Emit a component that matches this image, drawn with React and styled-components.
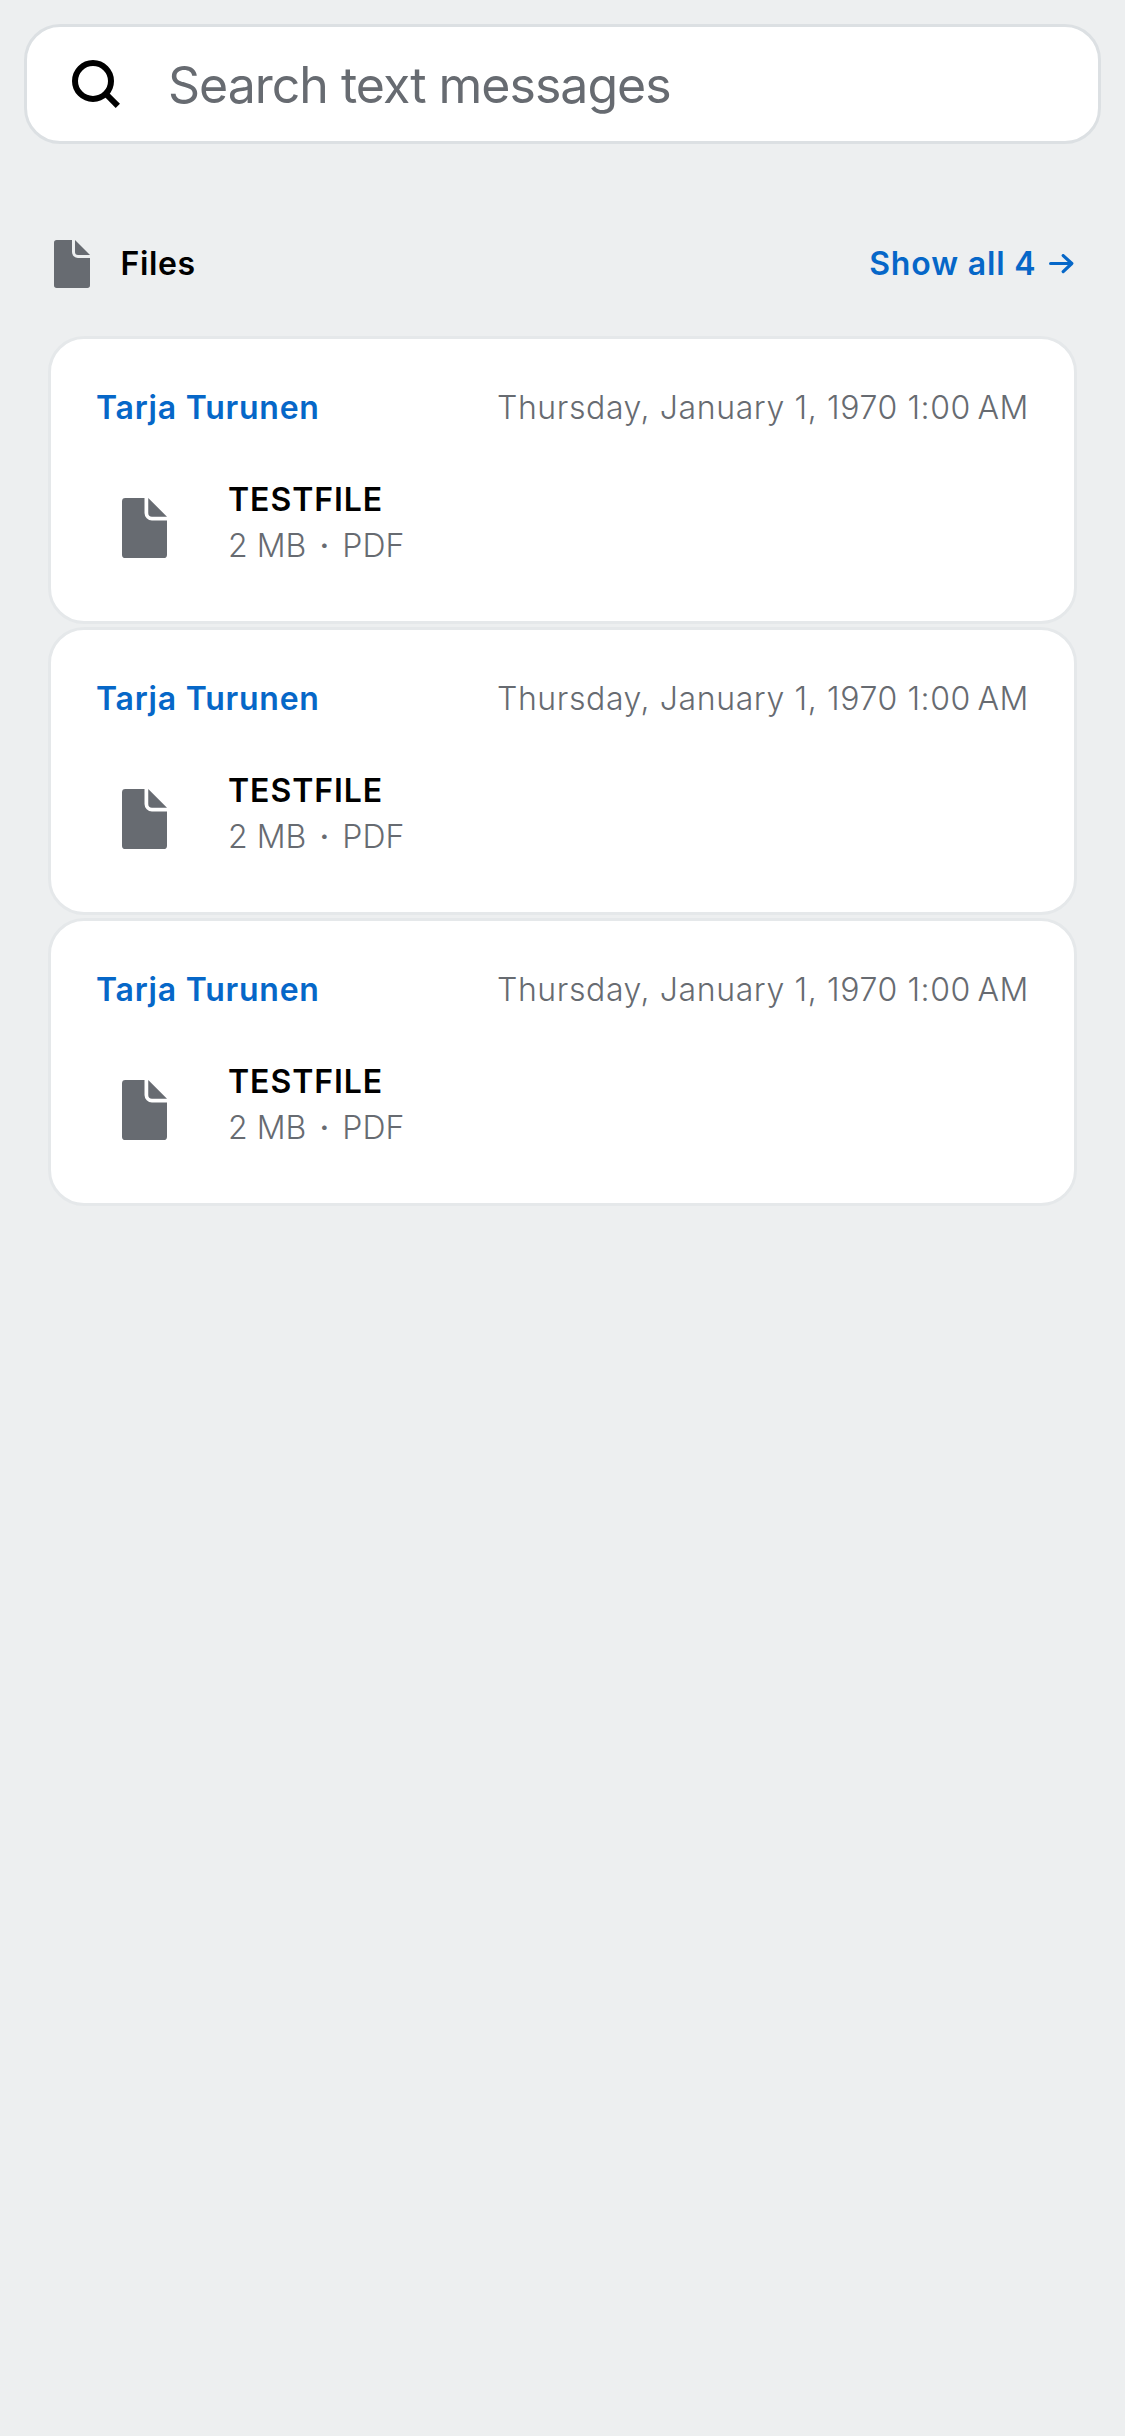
import React from "react";
import styled, { createGlobalStyle } from "styled-components";

const GlobalStyle = createGlobalStyle`
  *, *::before, *::after { box-sizing: border-box; }
  body {
    margin: 0;
    background: #edeff0;
    font-family: Inter, "Liberation Sans", sans-serif;
    font-size: 32px;
    color: #000;
  }
  h2 { margin: 0; }
`;

const Page = styled.main`
  display: flex;
  flex-direction: column;
  min-height: 100vh;
  padding: 24px;
`;

const SearchBar = styled.label`
  display: flex;
  align-items: center;
  gap: 48px;
  height: 120px;
  padding: 0 45px;
  background: #fff;
  border: 3px solid #dce0e3;
  border-radius: 36px;
`;

const SearchText = styled.span`
  font-size: 50px;
  line-height: 60px;
  letter-spacing: -1px;
  color: #676b71;
  padding-top: 1px;
  white-space: nowrap;
`;

const Section = styled.section`
  display: flex;
  flex-direction: column;
  padding: 96px 24px 0;
`;

const SectionHeader = styled.header`
  display: flex;
  align-items: center;
  height: 48px;
  margin-bottom: 48px;
  padding: 0 3px 0 6px;
`;

const SectionTitle = styled.h2`
  flex: 1;
  margin-left: 30.5px;
  font-size: 32px;
  font-weight: 600;
  line-height: 48px;
  letter-spacing: 0.65px;
`;

const ShowAll = styled.a`
  display: flex;
  align-items: center;
  gap: 12.5px;
  color: #0667c8;
  font-weight: 600;
  line-height: 48px;
  letter-spacing: 0.85px;
  white-space: nowrap;
`;

const List = styled.div`
  display: flex;
  flex-direction: column;
  gap: 3px;
`;

const Card = styled.article`
  height: 288px;
  padding: 45px 45px 42px;
  background: #fff;
  border: 3px solid #e5e8ea;
  border-radius: 36px;
`;

const CardHeader = styled.div`
  display: flex;
  justify-content: space-between;
  margin-bottom: 45px;
  line-height: 48px;
  white-space: nowrap;
`;

const Sender = styled.span`
  color: #0667c8;
  font-weight: 600;
  letter-spacing: 0.75px;
`;

const Timestamp = styled.time`
  color: #676b71;
  font-weight: 300;
  letter-spacing: 0.61px;
`;

const FileRow = styled.div`
  display: flex;
  gap: 36px;
  height: 102px;
`;

const FileThumb = styled.div`
  display: flex;
  align-items: center;
  justify-content: center;
  width: 96px;
`;

const FileInfo = styled.div`
  display: flex;
  flex-direction: column;
  line-height: 46px;
`;

const FileName = styled.span`
  font-weight: 600;
  letter-spacing: 0.95px;
`;

const FileMeta = styled.span`
  color: #676b71;
  font-weight: 300;
  letter-spacing: 0.05px;
`;

const Dot = styled.span`
  margin: 0 4px;
  font-weight: 500;
`;

const Icon = styled.svg`
  display: block;
  flex: none;
`;

const SearchIcon = () => (
  <Icon width="48" height="48" viewBox="0 0 48 48" fill="none" stroke="#000" strokeWidth="6">
    <circle cx="21" cy="21" r="18" />
    <path d="M33.5 33.5L45.8 45.8" />
  </Icon>
);

const FileIcon = ({ width, height }) => (
  <Icon width={width} height={height} viewBox="0 0 12 16" fill="#676b71">
    <path d="M0.9 0H6V4A2 2 0 0 0 8 6H12V15.1A0.9 0.9 0 0 1 11.1 16H0.9A0.9 0.9 0 0 1 0 15.1V0.9A0.9 0.9 0 0 1 0.9 0Z" />
    <path d="M7 0L12 5H8A1 1 0 0 1 7 4Z" />
  </Icon>
);

const ArrowIcon = () => (
  <Icon width="25" height="20" viewBox="0 0 25 20" fill="none" stroke="#0667c8" strokeWidth="3.2" strokeLinecap="round" strokeLinejoin="round">
    <path d="M1.6 9.5H22.6M14.2 1.6L22.8 9.5L14.2 17.6" />
  </Icon>
);

const files = [1, 2, 3].map((id) => ({
  id,
  sender: "Tarja Turunen",
  date: "Thursday, January 1, 1970 1:00\u202fAM",
  name: "TESTFILE",
  size: "2 MB",
  type: "PDF",
}));

export default function App() {
  return (
    <>
      <GlobalStyle />
      <Page>
        <SearchBar>
          <SearchIcon />
          <SearchText>Search text messages</SearchText>
        </SearchBar>
        <Section>
          <SectionHeader>
            <FileIcon width={36} height={48} />
            <SectionTitle>Files</SectionTitle>
            <ShowAll>
              Show all 4
              <ArrowIcon />
            </ShowAll>
          </SectionHeader>
          <List>
            {files.map((file) => (
              <Card key={file.id}>
                <CardHeader>
                  <Sender>{file.sender}</Sender>
                  <Timestamp>{file.date}</Timestamp>
                </CardHeader>
                <FileRow>
                  <FileThumb>
                    <FileIcon width={45} height={60} />
                  </FileThumb>
                  <FileInfo>
                    <FileName>{file.name}</FileName>
                    <FileMeta>
                      {file.size} <Dot>·</Dot> {file.type}
                    </FileMeta>
                  </FileInfo>
                </FileRow>
              </Card>
            ))}
          </List>
        </Section>
      </Page>
    </>
  );
}
